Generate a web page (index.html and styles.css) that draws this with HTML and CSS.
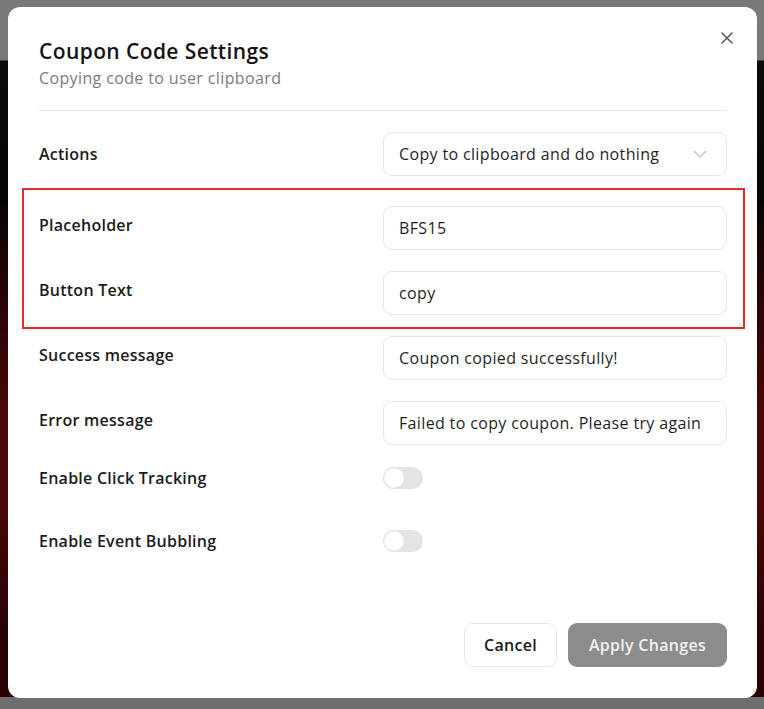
FILE: index.html
```html
<!DOCTYPE html>
<html lang="en">
<head>
<meta charset="utf-8">
<title>Coupon Code Settings</title>
<link rel="stylesheet" href="styles.css">
</head>
<body>
<div class="backdrop">
  <div class="modal">
    <button class="close" aria-label="Close">
      <svg width="12" height="12" viewBox="0 0 12 12"><path d="M1 1L11 11M11 1L1 11" stroke="#555" stroke-width="1.5" stroke-linecap="round" fill="none"/></svg>
    </button>
    <div class="header">
      <h1 class="title">Coupon Code Settings</h1>
      <p class="subtitle">Copying code to user clipboard</p>
    </div>
    <div class="form">
      <div class="row">
        <div class="label">Actions</div>
        <div class="select">
          <span>Copy to clipboard and do nothing</span>
          <svg width="14" height="8" viewBox="0 0 14 8"><path d="M1 1L7 7L13 1" stroke="#c2c2c2" stroke-width="1.2" fill="none"/></svg>
        </div>
      </div>
      <div class="group">
        <div class="row">
          <div class="label label-text">Placeholder</div>
          <div class="input">BFS15</div>
        </div>
        <div class="row">
          <div class="label label-text">Button Text</div>
          <div class="input">copy</div>
        </div>
      </div>
      <div class="row row-after-group">
        <div class="label label-text">Success message</div>
        <div class="input">Coupon copied successfully!</div>
      </div>
      <div class="row">
        <div class="label label-text">Error message</div>
        <div class="input">Failed to copy coupon. Please try again</div>
      </div>
      <div class="toggle-row first">
        <div class="label">Enable Click Tracking</div>
        <div class="toggle"><span class="knob"></span></div>
      </div>
      <div class="toggle-row second">
        <div class="label">Enable Event Bubbling</div>
        <div class="toggle"><span class="knob"></span></div>
      </div>
    </div>
    <div class="footer">
      <button class="btn btn-cancel">Cancel</button>
      <button class="btn btn-apply">Apply Changes</button>
    </div>
  </div>
</div>
</body>
</html>
```
FILE: styles.css
```css
* { box-sizing: border-box; }
html, body { margin: 0; padding: 0; }
body {
  font-family: "Open Sans", "Noto Sans", Arial, sans-serif;
  background: #707070;
  width: 764px;
  height: 709px;
  overflow: hidden;
}
.backdrop {
  height: 709px;
  padding: 7px 7px 0 8px;
  background:
    linear-gradient(to bottom,
      #787878 0, #787878 60px, #0b0b0b 61px, #050505 200px,
      #2a0404 300px, #4a0707 420px, #4a0707 500px,
      #2a0303 620px, #2a0202 697px, #6e6e6e 697px, #6e6e6e 709px);
}
.modal {
  position: relative;
  width: 749px;
  background: #fff;
  border-radius: 12px;
  padding: 30px 30px 31px 31px;
}
.close {
  position: absolute;
  top: 25px;
  right: 24px;
  width: 12px;
  height: 12px;
  padding: 0;
  border: 0;
  background: none;
  display: flex;
}
.header {
  border-bottom: 1px solid #e8e8e8;
  padding-bottom: 20px;
}
.title {
  margin: 0;
  font-size: 21px;
  line-height: 28px;
  font-weight: 600;
  letter-spacing: 0.4px;
  color: #141414;
}
.subtitle {
  margin: 1px 0 0;
  font-size: 16px;
  line-height: 24px;
  letter-spacing: 0.37px;
  color: #7b7b7b;
}
.form {
  margin-top: 21px;
  display: flex;
  flex-direction: column;
  gap: 21px;
}
.row {
  display: grid;
  grid-template-columns: 1fr 1fr;
  align-items: center;
}
.label {
  font-size: 16px;
  line-height: 24px;
  font-weight: 600;
  letter-spacing: 0.25px;
  color: #1b1b1b;
}
.label-text { padding-bottom: 6px; }
.select, .input {
  height: 44px;
  border: 1px solid #e6e6e6;
  border-radius: 9px;
  padding: 0 15px;
  font-size: 16px;
  letter-spacing: 0.35px;
  color: #1f1f1f;
  display: flex;
  align-items: center;
  white-space: nowrap;
  overflow: hidden;
}
.select { justify-content: space-between; padding-right: 19px; }
.group {
  border: 2px solid #e62b2b;
  margin: -9px -18px 0 -17px;
  padding: 16px 16px 12px 15px;
  display: flex;
  flex-direction: column;
  gap: 21px;
}
.row-after-group { margin-top: -14px; }
.toggle-row {
  display: grid;
  grid-template-columns: 1fr 1fr;
  align-items: center;
  height: 24px;
}
.toggle-row.first { margin-top: 0; }
.toggle-row.second { margin-top: 18px; }
.toggle {
  position: relative;
  width: 40px;
  height: 22px;
  border-radius: 11px;
  background: #e4e4e4;
}
.knob {
  position: absolute;
  left: 1px;
  top: 1px;
  width: 20px;
  height: 20px;
  border-radius: 50%;
  background: #fff;
  box-shadow: 0 0 1px rgba(0,0,0,0.15);
}
.footer {
  margin-top: 70px;
  display: flex;
  justify-content: flex-end;
  gap: 11px;
}
.btn {
  height: 44px;
  border-radius: 9px;
  font-family: inherit;
  font-size: 16px;
  font-weight: 600;
  letter-spacing: 0.3px;
  padding: 0;
  white-space: nowrap;
  text-align: center;
}
.btn-cancel {
  background: #fff;
  border: 1px solid #e6e6e6;
  color: #1b1b1b;
  width: 93px;
}
.btn-apply {
  background: #8c8c8c;
  border: 0;
  color: #f2f2f2;
  width: 159px;
}
```
